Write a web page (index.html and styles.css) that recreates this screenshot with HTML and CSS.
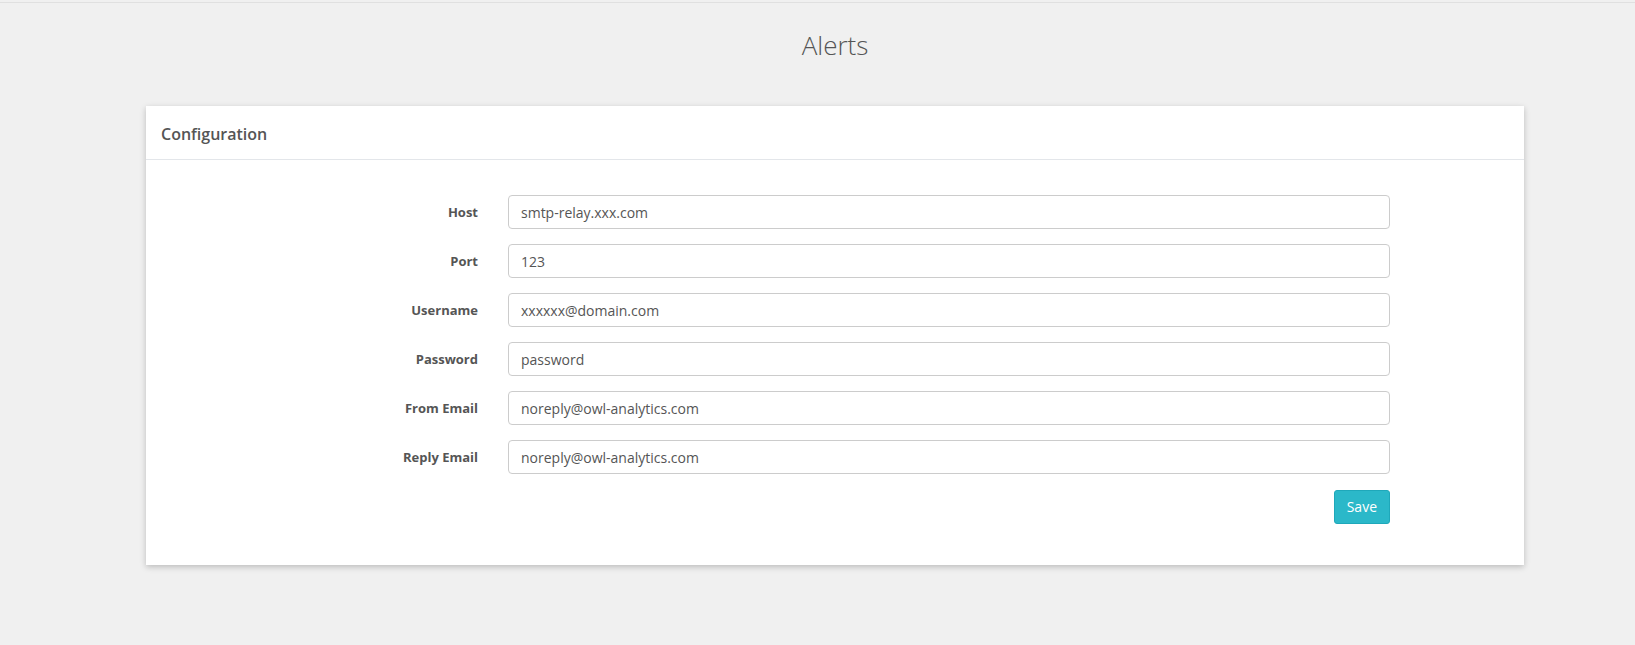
FILE: index.html
```html
<!DOCTYPE html>
<html lang="en">
<head>
<meta charset="utf-8">
<title>Alerts</title>
<link rel="stylesheet" href="styles.css">
</head>
<body>
<div class="topline"></div>
<main class="main">
  <h1 class="page-title">Alerts</h1>
  <section class="card">
    <header class="card-header">Configuration</header>
    <div class="card-body">
      <form class="form">
        <label class="form-label" for="host">Host</label>
        <input class="form-input" id="host" type="text" value="smtp-relay.xxx.com">
        <label class="form-label" for="port">Port</label>
        <input class="form-input" id="port" type="text" value="123">
        <label class="form-label" for="user">Username</label>
        <input class="form-input" id="user" type="text" value="xxxxxx@domain.com">
        <label class="form-label" for="pass">Password</label>
        <input class="form-input" id="pass" type="text" value="password">
        <label class="form-label" for="from">From Email</label>
        <input class="form-input" id="from" type="text" value="noreply@owl-analytics.com">
        <label class="form-label" for="reply">Reply Email</label>
        <input class="form-input" id="reply" type="text" value="noreply@owl-analytics.com">
        <div class="form-actions">
          <button class="btn-save" type="button">Save</button>
        </div>
      </form>
    </div>
  </section>
</main>
</body>
</html>
```
FILE: styles.css
```css
* { box-sizing: border-box; }
html, body {
  margin: 0;
  padding: 0;
  background: #f0f0f0;
  font-family: "Open Sans", "Liberation Sans", sans-serif;
  color: #555;
}
.topline {
  height: 3px;
  border-top: 1px solid #f0f0f0;
  border-bottom: 1px solid #e0e0e0;
}
.main {
  margin-left: 35px;
  padding: 24px 111px 60px;
}
.page-title {
  margin: 0 0 43px;
  text-align: center;
  font-weight: 300;
  font-size: 26px;
  line-height: 36px;
  color: #555;
}
.card {
  background: #fff;
  box-shadow: 0 2px 6px rgba(0, 0, 0, 0.22);
}
.card-header {
  padding: 17px 15px 14px;
  font-size: 16px;
  line-height: 22px;
  font-weight: 600;
  color: #555;
  border-bottom: 1px solid #e3e6ea;
}
.card-body {
  padding: 35px 15px 41px;
}
.form {
  display: grid;
  grid-template-columns: 317px 882px;
  column-gap: 30px;
  row-gap: 15px;
}
.form-label {
  text-align: right;
  font-size: 13px;
  line-height: 20px;
  font-weight: 700;
  padding-top: 7px;
  color: #555;
}
.form-input {
  height: 34px;
  padding: 6px 12px;
  border: 1px solid #ccc;
  border-radius: 4px;
  font-family: inherit;
  font-size: 14px;
  line-height: 20px;
  color: #555;
  background: #fff;
}
.form-actions {
  grid-column: 2;
  display: flex;
  justify-content: flex-end;
  padding-top: 1px;
}
.btn-save {
  height: 34px;
  padding: 6px 12px;
  border: 1px solid #1fa8ba;
  border-radius: 3px;
  background: #2bb8c9;
  color: #fff;
  font-family: inherit;
  font-size: 14px;
  line-height: 20px;
}
```
